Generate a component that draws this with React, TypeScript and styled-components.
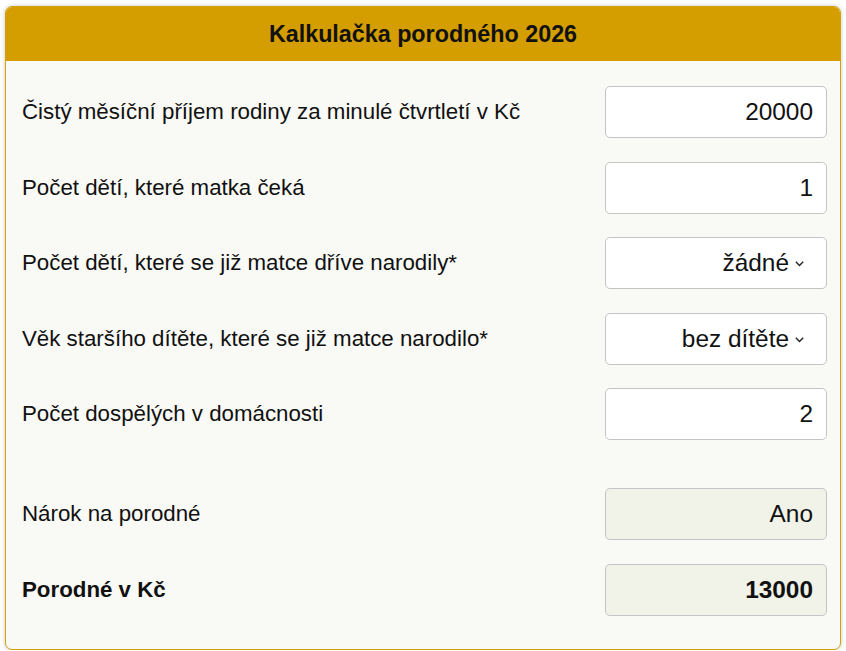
import React from "react";
import styled, { createGlobalStyle } from "styled-components";

const Global = createGlobalStyle`
  html, body { margin: 0; padding: 0; background: #ffffff; }
  body { font-family: "Liberation Sans", Arial, sans-serif; color: #111; }
`;

const Page = styled.div`
  padding: 6px 5px 0 5px;
`;

const Card = styled.div`
  border: 1px solid #d4a00a;
  border-radius: 7px;
  background: #f9f9f5;
  box-shadow: 0 0 4px rgba(0, 0, 0, 0.22);
  overflow: hidden;
  height: 644px;
  box-sizing: border-box;
`;

const Header = styled.div`
  background: #d49d00;
  height: 54px;
  display: flex;
  align-items: center;
  justify-content: center;
  font-weight: bold;
  font-size: 23.3px;
  color: #111;
`;

const Body = styled.div`
  display: flex;
  flex-direction: column;
  gap: 23.5px;
  padding: 25px 13px 0 16px;
`;

const Row = styled.div`
  display: flex;
  align-items: center;
  justify-content: space-between;
  height: 52px;
`;

const Label = styled.div<{ $bold?: boolean }>`
  font-size: 22.3px;
  font-weight: ${(p) => (p.$bold ? "bold" : "normal")};
  color: #111;
`;

const Field = styled.div<{ $readonly?: boolean; $bold?: boolean }>`
  width: 222px;
  height: 52px;
  box-sizing: border-box;
  border: 1px solid #c4c4c4;
  border-radius: 5px;
  background: ${(p) => (p.$readonly ? "#f1f2e8" : "#ffffff")};
  display: flex;
  align-items: center;
  justify-content: flex-end;
  padding: 0 13px 0 12px;
  font-size: 24.4px;
  font-weight: ${(p) => (p.$bold ? "bold" : "normal")};
  color: #111;
  gap: 6px;
`;

const ChevronIcon = styled.svg`
  margin-right: 9px;
  margin-top: 2px;
  flex: none;
`;

const Spacer = styled.div`
  height: 1px;
`;

const Chevron = () => (
  <ChevronIcon width="9" height="6" viewBox="0 0 9 6">
    <path d="M0.8 0.8 L4.5 4.6 L8.2 0.8" fill="none" stroke="#222" strokeWidth="1.4" />
  </ChevronIcon>
);

export default function App() {
  return (
    <>
      <Global />
      <Page>
        <Card>
          <Header>Kalkulačka porodného 2026</Header>
          <Body>
            <Row>
              <Label>Čistý měsíční příjem rodiny za minulé čtvrtletí v Kč</Label>
              <Field>20000</Field>
            </Row>
            <Row>
              <Label>Počet dětí, které matka čeká</Label>
              <Field>1</Field>
            </Row>
            <Row>
              <Label>Počet dětí, které se již matce dříve narodily*</Label>
              <Field>
                žádné
                <Chevron />
              </Field>
            </Row>
            <Row>
              <Label>Věk staršího dítěte, které se již matce narodilo*</Label>
              <Field>
                bez dítěte
                <Chevron />
              </Field>
            </Row>
            <Row>
              <Label>Počet dospělých v domácnosti</Label>
              <Field>2</Field>
            </Row>
            <Spacer />
            <Row>
              <Label>Nárok na porodné</Label>
              <Field $readonly>Ano</Field>
            </Row>
            <Row>
              <Label $bold>Porodné v Kč</Label>
              <Field $readonly $bold>13000</Field>
            </Row>
          </Body>
        </Card>
      </Page>
    </>
  );
}
